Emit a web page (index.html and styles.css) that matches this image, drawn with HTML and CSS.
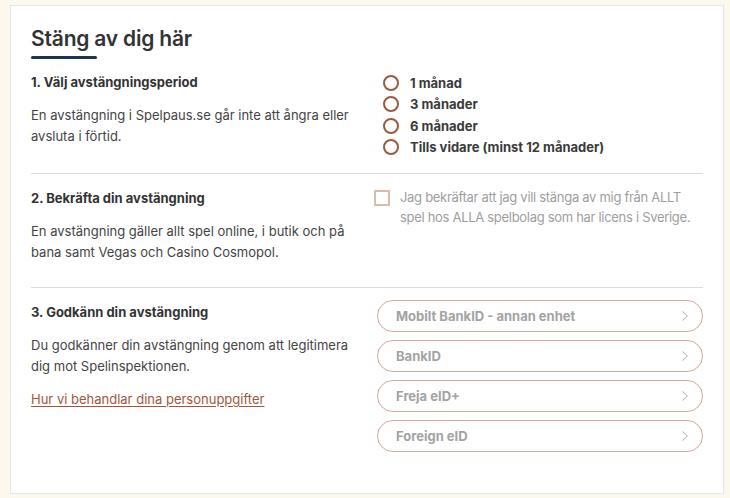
FILE: index.html
```html
<!DOCTYPE html>
<html lang="sv">
<head>
<meta charset="utf-8">
<title>Stäng av dig här</title>
<link rel="stylesheet" href="styles.css">
</head>
<body>
<main class="card">
  <h1 class="title">Stäng av dig här</h1>

  <section class="step">
    <div class="step-info">
      <h2 class="step-title">1. Välj avstängningsperiod</h2>
      <p class="step-text">En avstängning i Spelpaus.se går inte att ångra eller avsluta i förtid.</p>
    </div>
    <div class="step-action">
      <ul class="radios">
        <li class="radio"><span class="radio-dot"></span>1 månad</li>
        <li class="radio"><span class="radio-dot"></span>3 månader</li>
        <li class="radio"><span class="radio-dot"></span>6 månader</li>
        <li class="radio"><span class="radio-dot"></span>Tills vidare (minst 12 månader)</li>
      </ul>
    </div>
  </section>

  <section class="step">
    <div class="step-info">
      <h2 class="step-title">2. Bekräfta din avstängning</h2>
      <p class="step-text">En avstängning gäller allt spel online, i butik och på bana samt Vegas och Casino Cosmopol.</p>
    </div>
    <div class="step-action">
      <label class="confirm"><span class="checkbox"></span><span class="confirm-text">Jag bekräftar att jag vill stänga av mig från ALLT spel hos ALLA spelbolag som har licens i Sverige.</span></label>
    </div>
  </section>

  <section class="step">
    <div class="step-info">
      <h2 class="step-title">3. Godkänn din avstängning</h2>
      <p class="step-text">Du godkänner din avstängning genom att legitimera dig mot Spelinspektionen.</p>
      <a class="link" href="#">Hur vi behandlar dina personuppgifter</a>
    </div>
    <div class="step-action buttons">
      <button class="id-btn">Mobilt BankID - annan enhet<svg class="chev" viewBox="0 0 6 10" width="6" height="10"><path d="M0.5 0.5 L5.5 5 L0.5 9.5" fill="none" stroke="#b5b5b5" stroke-width="1"/></svg></button>
      <button class="id-btn">BankID<svg class="chev" viewBox="0 0 6 10" width="6" height="10"><path d="M0.5 0.5 L5.5 5 L0.5 9.5" fill="none" stroke="#b5b5b5" stroke-width="1"/></svg></button>
      <button class="id-btn">Freja eID+<svg class="chev" viewBox="0 0 6 10" width="6" height="10"><path d="M0.5 0.5 L5.5 5 L0.5 9.5" fill="none" stroke="#b5b5b5" stroke-width="1"/></svg></button>
      <button class="id-btn">Foreign eID<svg class="chev" viewBox="0 0 6 10" width="6" height="10"><path d="M0.5 0.5 L5.5 5 L0.5 9.5" fill="none" stroke="#b5b5b5" stroke-width="1"/></svg></button>
    </div>
  </section>
</main>
</body>
</html>
```

FILE: styles.css
```css
* { box-sizing: border-box; }
html, body { margin: 0; padding: 0; }
body {
  background: #fcf8ee;
  font-family: Inter, "Noto Sans", sans-serif;
  color: #333;
  padding: 5px 6px 4px 10px;
}
.card {
  background: #fff;
  border: 1px solid #e6e6e6;
  padding: 18px 20px 25px 20px;
  height: 489px;
}
.title {
  margin: 0;
  font-size: 21px;
  line-height: 30px;
  font-weight: 600;
  color: #333;
  letter-spacing: -0.2px;
}
.title::after {
  content: "";
  display: block;
  width: 66px;
  height: 3px;
  background: #1e3252;
  border-radius: 2px;
  margin-top: 2px;
}
.step {
  display: grid;
  grid-template-columns: 1fr 1fr;
  column-gap: 20px;
  padding: 14px 0 15px;
  border-top: 1px solid #dedede;
}
.step:first-of-type {
  border-top: none;
  padding-top: 13px;
}
.step-title {
  margin: 0;
  font-size: 13px;
  line-height: 20px;
  font-weight: 700;
  color: #333;
}
.step-text {
  margin: 13px 0 10px;
  font-size: 13px;
  line-height: 20.5px;
  color: #444;
}
.radios {
  list-style: none;
  margin: 0;
  padding: 0 0 0 6px;
}
.radio {
  display: flex;
  align-items: center;
  gap: 11px;
  height: 21.5px;
  font-size: 13px;
  font-weight: 700;
  color: #3a3a3a;
}
.radio-dot {
  width: 16px;
  height: 16px;
  border: 2px solid #9b5a3e;
  border-radius: 50%;
  flex: none;
}
.confirm {
  display: flex;
  align-items: flex-start;
  gap: 10px;
  margin-left: -3px;
}
.checkbox {
  width: 16px;
  height: 16px;
  border: 2px solid #d9bcae;
  flex: none;
  margin-top: 2px;
}
.confirm-text {
  font-size: 13px;
  line-height: 19.5px;
  color: #9e9e9e;
  letter-spacing: -0.3px;
}
.link {
  display: inline-block;
  font-size: 13px;
  line-height: 20px;
  color: #a0573a;
  text-decoration: underline;
  text-underline-offset: 2px;
  margin-top: 3px;
}
.buttons {
  display: flex;
  flex-direction: column;
  gap: 8px;
  margin-top: -2px;
}
.id-btn {
  display: flex;
  align-items: center;
  justify-content: space-between;
  height: 32px;
  padding: 0 14px 0 18px;
  border: 1.5px solid #d4ab9c;
  border-radius: 16px;
  background: #fff;
  font-family: Inter, "Noto Sans", sans-serif;
  font-size: 13px;
  font-weight: 700;
  color: #a3a3a3;
  text-align: left;
}
.chev { flex: none; }
```
